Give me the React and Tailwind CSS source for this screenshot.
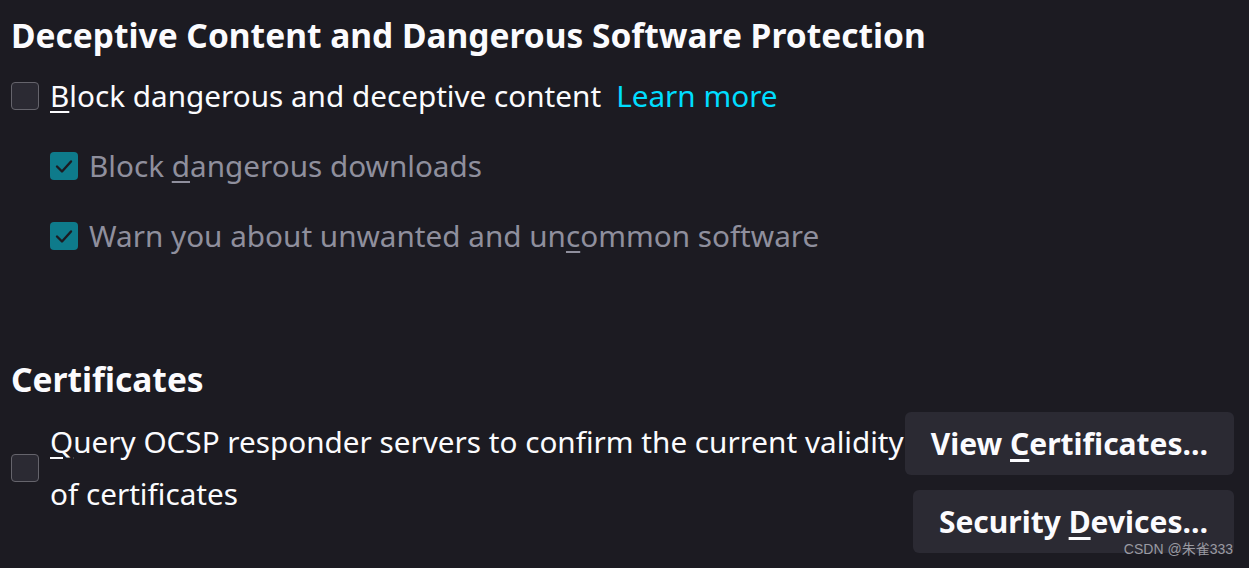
import React from "react";

const font = { fontFamily: '"Noto Sans", "Open Sans", sans-serif' };

function Box({ checked }) {
  if (checked) {
    return (
      <span className="flex h-[28px] w-[28px] shrink-0 items-center justify-center rounded-[4px] bg-[#0e7b8b]">
        <svg width="22" height="22" viewBox="0 0 22 22" fill="none">
          <path d="M4 11.5l5 5 9-10" stroke="#1c1b22" strokeWidth="2.4" strokeLinecap="round" strokeLinejoin="round" />
        </svg>
      </span>
    );
  }
  return (
    <span className="h-[28px] w-[28px] shrink-0 rounded-[4px] border border-[#65646c] bg-[#2b2a33]" />
  );
}

export default function App() {
  return (
    <div className="relative h-[568px] w-[1249px] overflow-hidden bg-[#1c1b22] pl-[11px] text-[#fbfbfe]" style={font}>
      <h1 className="pt-[13px] text-[33.5px] font-bold leading-[44px]">
        Deceptive Content and Dangerous Software Protection
      </h1>

      <div className="mt-[19px] flex h-[40px] items-center gap-[11px] text-[29.7px]">
        <Box />
        <span>
          <u className="underline-offset-4">B</u>lock dangerous and deceptive content
        </span>
        <span className="ml-[4px] text-[#00ddff]">Learn more</span>
      </div>

      <div className="ml-[39px] mt-[30px] flex h-[40px] items-center gap-[11px] text-[29.7px] text-[#8f8f9d]">
        <Box checked />
        <span>
          Block <u className="underline-offset-4">d</u>angerous downloads
        </span>
      </div>

      <div className="ml-[39px] mt-[30px] flex h-[40px] items-center gap-[11px] text-[29.7px] text-[#8f8f9d]">
        <Box checked />
        <span>
          Warn you about unwanted and un<u className="underline-offset-4">c</u>ommon software
        </span>
      </div>

      <h2 className="mt-[101px] text-[33.5px] font-bold leading-[44px]">Certificates</h2>

      <div className="mt-[16px] flex pr-[15px]">
        <div className="-mt-[1px] flex flex-1 items-center gap-[11px] self-start">
          <Box />
          <span className="whitespace-nowrap text-[29.7px] leading-[52px]">
            <u className="underline-offset-4">Q</u>uery OCSP responder servers to confirm the current validity
            <br />
            of certificates
          </span>
        </div>
        <div className="-mt-[5px] flex flex-col items-end gap-[15px]">
          <button className="h-[63px] w-[329px] rounded-[6px] bg-[#2b2a33] text-center text-[30px] font-bold">
            <span>
              View <u className="underline-offset-4">C</u>ertificates…
            </span>
          </button>
          <button className="h-[63px] w-[321px] rounded-[6px] bg-[#2b2a33] text-center text-[30px] font-bold">
            <span>
              Security <u className="underline-offset-4">D</u>evices…
            </span>
          </button>
        </div>
      </div>

      <span
        className="absolute bottom-[8px] right-[16px] text-[14px] text-[#9a9aa2]"
        style={{ fontFamily: '"Liberation Sans", "Noto Sans CJK SC", sans-serif' }}
      >
        CSDN @朱雀333
      </span>
    </div>
  );
}
